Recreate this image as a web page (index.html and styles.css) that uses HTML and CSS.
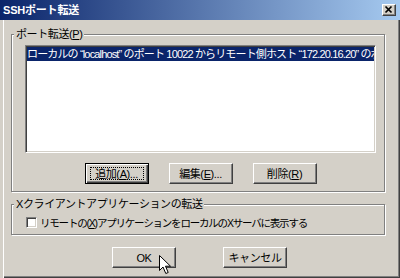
FILE: index.html
```html
<!DOCTYPE html>
<html lang="ja">
<head>
<meta charset="utf-8">
<link rel="stylesheet" href="styles.css">
</head>
<body>
<div class="window">
  <div class="titlebar">
    <span class="title">SSHポート転送</span>
    <div class="close">
      <svg width="12" height="10" viewBox="0 0 12 10"><path d="M2.5 1.5 L8.5 7.5 M8.5 1.5 L2.5 7.5" stroke="#000" stroke-width="1.7" fill="none"/></svg>
    </div>
  </div>
  <div class="frame">
    <div class="group g1">
      <span class="legend">ポート転送(<u>P</u>)</span>
      <div class="listbox">
        <div class="row sel">ローカルの “localhost” のポート 10022 からリモート側ホスト “172.20.16.20” のポート 22 へ転送</div>
      </div>
      <div class="btnrow">
        <div class="btn default"><span class="focus">追加(<u>A</u>)...</span></div>
        <div class="btn">編集(<u>E</u>)...</div>
        <div class="btn">削除(<u>R</u>)</div>
      </div>
    </div>
    <div class="group g2">
      <span class="legend">Xクライアントアプリケーションの転送</span>
      <div class="check"><span class="box"></span><span class="clabel">リモートの(<u>X</u>)アプリケーションをローカルのXサーバに表示する</span></div>
    </div>
    <div class="dlgbtns">
      <div class="btn">OK</div>
      <div class="btn">キャンセル</div>
    </div>
  </div>
  <svg class="cursor" width="13" height="20" viewBox="0 0 13 20"><path d="M0.5 0.5 L0.5 15.5 L4 12 L6.8 18.5 L9.2 17.5 L6.5 11.2 L11.5 11.2 Z" fill="#fff" stroke="#000" stroke-width="1" stroke-linejoin="miter"/></svg>
</div>
</body>
</html>
```
FILE: styles.css
```css
* { box-sizing: border-box; }
html, body { margin: 0; padding: 0; }
body {
  width: 400px;
  height: 278px;
  overflow: hidden;
  background: #D4D0C8;
  font-family: "Liberation Sans", "Noto Sans CJK JP", sans-serif;
  font-size: 11px;
  color: #000;
}
u { text-decoration: underline; text-underline-offset: 1px; }
.window {
  position: relative;
  width: 400px;
  height: 278px;
  display: flex;
  flex-direction: column;
}
.titlebar {
  height: 20px;
  flex: none;
  background: linear-gradient(to right, #0A246A, #A6CAF0);
  display: flex;
  align-items: center;
  justify-content: space-between;
  padding: 0 4px 0 3px;
}
.title {
  color: #fff;
  font-weight: bold;
  font-size: 11px;
  line-height: 12px;
  letter-spacing: -0.2px;
}
.close {
  width: 14px;
  height: 12px;
  background: #D4D0C8;
  border: 1px solid;
  border-color: #fff #404040 #404040 #fff;
  box-shadow: inset -1px -1px 0 #808080;
  display: flex;
  align-items: center;
  justify-content: center;
}
.frame {
  flex: 1;
  padding: 14px 0 0 11px;
  box-shadow: inset 3px 0 0 #D4D0C8, inset 4px 0 0 #fff, inset -1px -1px 0 #404040, inset -2px -2px 0 #808080;
}
.group {
  position: relative;
  width: 374px;
  border: 1px solid #808080;
  box-shadow: inset 1px 1px 0 #fff, 1px 1px 0 #fff;
}
.legend {
  position: absolute;
  top: -7px;
  left: 2px;
  padding: 0 2px;
  background: #D4D0C8;
  line-height: 13px;
  letter-spacing: -0.4px;
  white-space: nowrap;
}
.g1 {
  height: 158px;
  padding: 10px 8px 7px 13px;
}
.listbox {
  width: 351px;
  height: 108px;
  background: #fff;
  border: 1px solid;
  border-color: #808080 #fff #fff #808080;
  box-shadow: inset 1px 1px 0 #404040, inset -1px -1px 0 #D4D0C8;
  padding: 1px;
  overflow: hidden;
}
.row {
  height: 14px;
  line-height: 14px;
  white-space: nowrap;
  overflow: hidden;
  letter-spacing: -0.85px;
}
.sel {
  background: #0A246A;
  color: #fff;
}
.btnrow {
  margin-top: 10px;
  display: flex;
  justify-content: center;
  gap: 20px;
}
.btn {
  width: 64px;
  height: 21px;
  background: #D4D0C8;
  border: 1px solid;
  border-color: #fff #404040 #404040 #fff;
  box-shadow: inset -1px -1px 0 #808080;
  display: flex;
  align-items: center;
  justify-content: center;
  font-size: 11px;
  letter-spacing: -0.4px;
  line-height: 12px;
  white-space: nowrap;
}
.btn.default {
  border: 1px solid #000;
  box-shadow: inset 1px 1px 0 #fff, inset -1px -1px 0 #404040, inset -2px -2px 0 #808080;
}
.focus {
  width: 54px;
  height: 13px;
  border: 1px dotted #000;
  display: flex;
  align-items: center;
  justify-content: center;
}
.g2 {
  margin-top: 12px;
  height: 31px;
  padding: 12px 0 0 14px;
}
.check {
  display: flex;
  align-items: center;
  gap: 3px;
  height: 11px;
}
.box {
  width: 11px;
  height: 11px;
  flex: none;
  background: #fff;
  border: 1px solid;
  border-color: #808080 #fff #fff #808080;
  box-shadow: inset 1px 1px 0 #404040, inset -1px -1px 0 #D4D0C8;
}
.clabel {
  font-size: 10.5px;
  letter-spacing: -1.2px;
  line-height: 12px;
  white-space: nowrap;
}
.dlgbtns {
  margin-top: 12px;
  display: flex;
  gap: 47px;
  padding-left: 101px;
}
.cursor {
  position: absolute;
  left: 159px;
  top: 255px;
}
```
